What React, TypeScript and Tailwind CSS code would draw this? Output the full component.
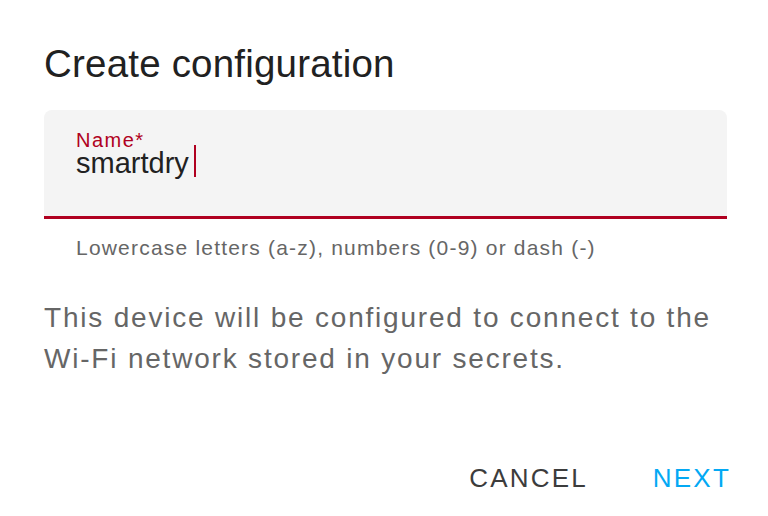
export default function App() {
  return (
    <div
      className="w-[768px] h-[516px] bg-white pl-[44px] pr-[37px] pt-[40px] flex flex-col"
      style={{ fontFamily: '"Liberation Sans", Arial, sans-serif' }}
    >
      {/* Title */}
      <h2 className="text-[38.5px] leading-[48px] text-[#212121] tracking-[0.2px]">Create configuration</h2>

      {/* Text field */}
      <div className="mt-[22px] mr-[4px] h-[109px] bg-[#f4f4f4] rounded-t-[8px] border-b-[3px] border-[#b00020] pl-[32px] pt-[20px]">
        <div className="text-[20px] leading-[20px] text-[#b00020] tracking-[1.5px]">Name*</div>
        <div className="flex items-start text-[29px] leading-[26px] text-[#212121]">
          <span>smartdry</span>
          <span className="ml-[5px] -mt-[5px] w-[2px] h-[32px] bg-[#b00020]" />
        </div>
      </div>

      {/* Helper */}
      <p className="pl-[32px] mt-[17px] text-[21px] leading-[24px] text-[#666] tracking-[1.2px]">
        Lowercase letters (a-z), numbers (0-9) or dash (-)
      </p>

      {/* Body */}
      <p className="mt-[37px] text-[28px] leading-[41px] text-[#666] tracking-[1.8px]">
        This device will be configured to connect to the
        <br />
        Wi-Fi network stored in your secrets.
      </p>

      {/* Actions */}
      <div className="mt-auto mb-[22px] flex justify-end items-center gap-[65px] text-[26px] leading-[32px] tracking-[2.2px]">
        <button className="text-[#3c3c3c]">CANCEL</button>
        <button className="text-[#03a9f4]">NEXT</button>
      </div>
    </div>
  );
}
